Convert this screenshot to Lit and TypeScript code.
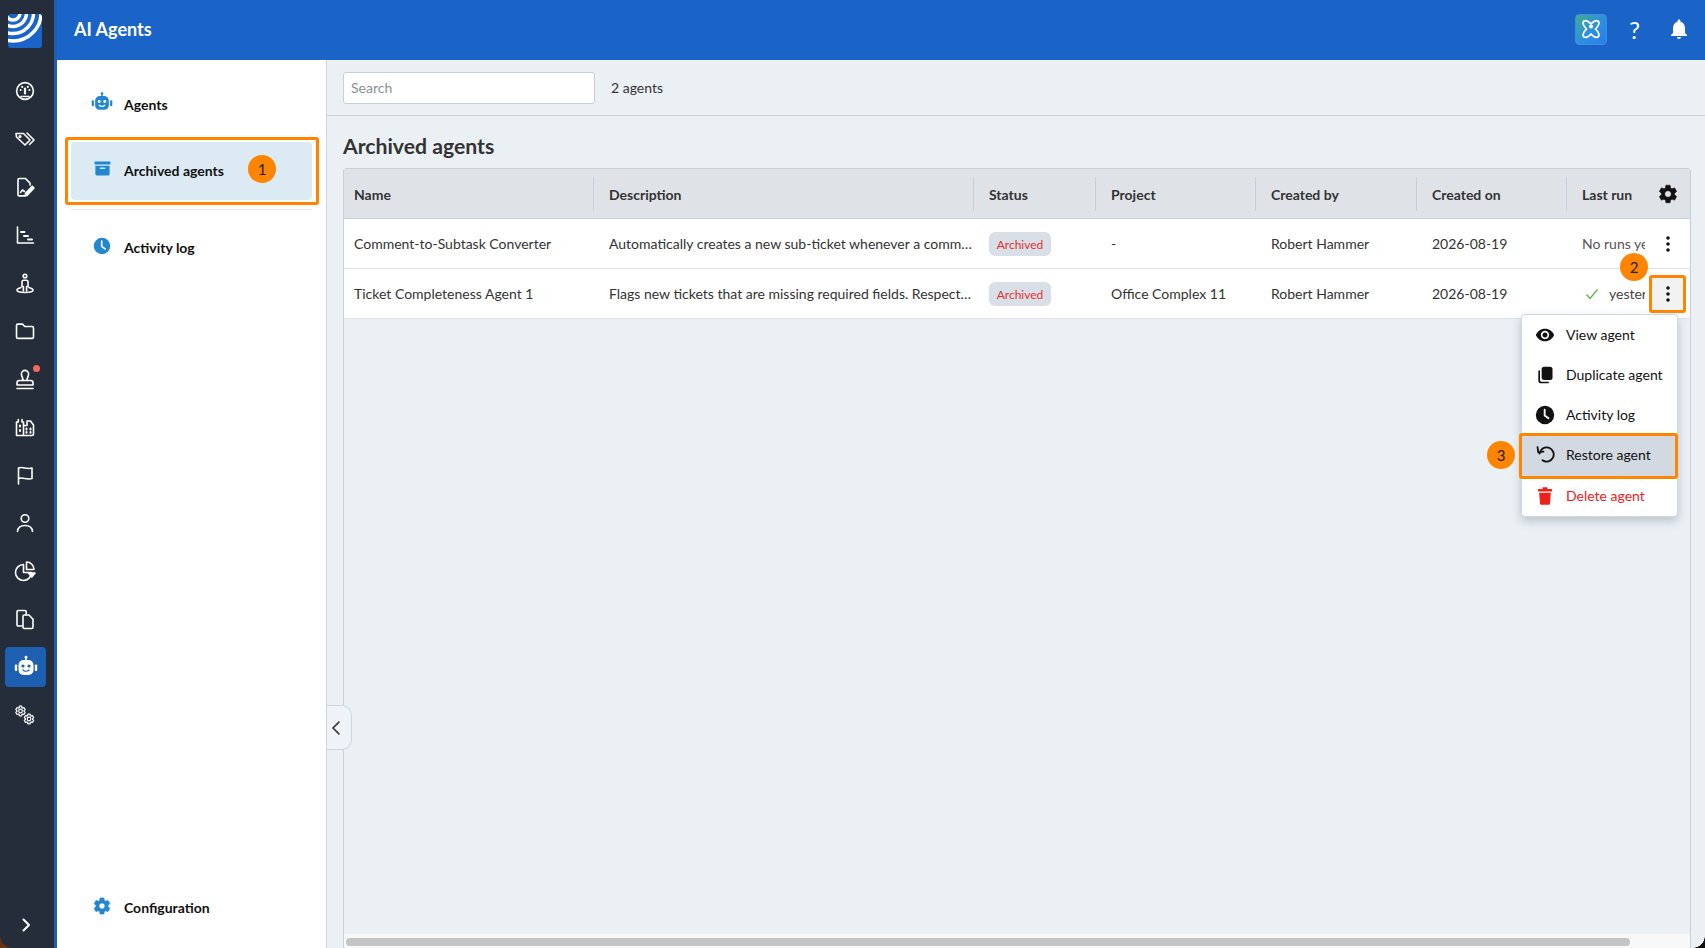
import {LitElement, html, css, svg} from 'lit';
import {customElement} from 'lit/decorators.js';

const GEAR = 'M19.14 12.94c.04-.3.06-.61.06-.94 0-.32-.02-.64-.07-.94l2.03-1.58a.49.49 0 0 0 .12-.61l-1.92-3.32a.488.488 0 0 0-.59-.22l-2.39.96c-.5-.38-1.03-.7-1.62-.94l-.36-2.54a.484.484 0 0 0-.48-.41h-3.84c-.24 0-.43.17-.47.41l-.36 2.54c-.59.24-1.13.57-1.62.94l-2.39-.96c-.22-.08-.47 0-.59.22L2.74 8.87c-.12.21-.08.47.12.61l2.03 1.58c-.05.3-.09.63-.09.94s.02.64.07.94l-2.03 1.58a.49.49 0 0 0-.12.61l1.92 3.32c.12.22.37.29.59.22l2.39-.96c.5.38 1.03.7 1.62.94l.36 2.54c.05.24.24.41.48.41h3.84c.24 0 .44-.17.47-.41l.36-2.54c.59-.24 1.13-.56 1.62-.94l2.39.96c.22.08.47 0 .59-.22l1.92-3.32c.12-.22.07-.47-.12-.61l-2.01-1.58zM12 15.6c-1.98 0-3.6-1.62-3.6-3.6s1.62-3.6 3.6-3.6 3.6 1.62 3.6 3.6-1.62 3.6-3.6 3.6z';

const ic = (size: number, body: unknown, fill = 'currentColor') => html`
  <svg width=${size} height=${size} viewBox="0 0 24 24" fill=${fill}>${body}</svg>
`;

const robot = (size: number, color: string, face: string) => ic(size, svg`
  <rect x="11.2" y="1.5" width="1.6" height="4" fill=${color}/>
  <circle cx="12" cy="2.2" r="1.4" fill=${color}/>
  <rect x="4.5" y="5" width="15" height="15" rx="5" fill=${color}/>
  <rect x="0.8" y="9.5" width="2.4" height="6.5" rx="1" fill=${color}/>
  <rect x="20.8" y="9.5" width="2.4" height="6.5" rx="1" fill=${color}/>
  <circle cx="9" cy="11" r="1.6" fill=${face}/>
  <circle cx="15" cy="11" r="1.6" fill=${face}/>
  <path d="M9 15c1.6 1.5 4.4 1.5 6 0" fill="none" stroke=${face} stroke-width="1.4" stroke-linecap="round"/>
`);

const clock = (size: number, color: string) => ic(size, svg`
  <circle cx="12" cy="12" r="11" fill=${color}/>
  <path d="M11.6 5.5v7l4.6 3.4" fill="none" stroke="#fff" stroke-width="2.2" stroke-linecap="round" stroke-linejoin="round"/>
`);

const line = (body: unknown) => html`
  <svg class="rail-ico" width="24" height="24" viewBox="0 0 24 24" fill="none" stroke="#fff" stroke-width="1.6" stroke-linecap="round" stroke-linejoin="round">${body}</svg>
`;

const RAIL = [
  svg`<circle cx="12" cy="12" r="8.4"/><path d="M12 9.500v5" stroke-width="2.200"/><path d="M7.600 11v.1M9.200 7.800v.1M14.800 7.800v.1M16.400 11v.1" stroke-width="2"/><path d="M8 17.500h8" stroke-width="1.400"/>`,
  svg`<path d="M3 6.500h7.500l6.500 6.500-5 5L3.500 10z"/><circle cx="7" cy="9.500" r=".8"/><path d="M14 6l7 7-4.500 4.500"/>`,
  svg`<path d="M12.500 3.500H6.200c-.7 0-1.200.5-1.200 1.200v15c0 .7.500 1.200 1.200 1.200H12M12.500 3.500l4.500 4.600v2"/><path d="M7.500 17.500l2-2.500 2 1.500"/><path d="M14 20.500l7-7.500-1.800-1.800-6.600 7-.4 2.500z" fill="#fff"/>`,
  svg`<path d="M4.500 4v16h16"/><path d="M8 9h3.500M11 13h4M15 16.500h4" stroke-width="1.900"/>`,
  svg`<circle cx="12" cy="5" r="1.800"/><path d="M9 15.500V10.800c0-1 .8-1.600 1.600-1.600h2.800c.8 0 1.600.6 1.600 1.600v4.700M10.400 15.500V20M13.600 15.500V20"/><path d="M8 16.500c-2.400.6-4 1.600-4 2.600 0 1.400 3.600 2.400 8 2.400s8-1 8-2.400c0-1-1.600-2-4-2.600"/>`,
  svg`<path d="M3.500 18V6.500c0-.8.6-1.400 1.400-1.400h4.600l2.200 2.400h7.400c.8 0 1.400.6 1.400 1.400V18c0 .8-.6 1.400-1.400 1.400H4.900c-.8 0-1.400-.6-1.400-1.400z"/>`,
  svg`<path d="M10 13.500c0-3-1.600-4-1.600-6.500a3.600 3.600 0 0 1 7.200 0c0 2.500-1.600 3.500-1.600 6.500"/><path d="M4 18v-2.200c0-1.300 1-2.300 2.300-2.300h11.400c1.300 0 2.300 1 2.300 2.300V18zM4 21.500h16"/>`,
  svg`<path d="M3.500 20.500V7h1.800V4.500M9 4.500V7h1.500v13.500M10.500 10.500h3.500V6h3.500l3 4v8.800c0 1-.7 1.700-1.700 1.700H3.500"/><path d="M7 10.500v1M7 15v1M13.500 13.500v1M13.500 17v.8M17.500 13.500v1M17.500 17v.8" stroke-width="2"/>`,
  svg`<path d="M5.500 21V5c4.500-1.800 8 1.800 13.500 0v10.500c-5.500 1.800-9-1.800-13.500 0"/>`,
  svg`<circle cx="12" cy="7.500" r="3.800"/><path d="M4.500 20.500c.3-4 3.500-6 7.500-6s7.200 2 7.500 6"/>`,
  svg`<path d="M10.500 5.500a8 8 0 1 0 8 8h-8z"/><path d="M13.500 3v7.500H21A7.500 7.500 0 0 0 13.500 3z"/><path d="M15.500 14h6.500l-3.250 4z" fill="#fff"/>`,
  svg`<path d="M9 19H5.200c-.7 0-1.200-.5-1.200-1.200V4.700c0-.7.500-1.200 1.200-1.200H12c.7 0 1.200.5 1.200 1.200V8"/><path d="M10 9.500c0-.8.6-1.500 1.400-1.500H16l4 4.200v8c0 .8-.6 1.300-1.400 1.300h-7.200c-.8 0-1.400-.5-1.400-1.300z"/>`,
];

const GEARS = html`
  <svg width="24" height="24" viewBox="0 0 24 24">
    <path d=${GEAR} transform="translate(.5 2) scale(.5)" fill="none" stroke="#fff" stroke-width="2.400"/>
    <path d=${GEAR} transform="translate(9 10) scale(.5)" fill="none" stroke="#fff" stroke-width="2.400"/>
  </svg>
`;

const COLS = ['Name', 'Description', 'Status', 'Project', 'Created by', 'Created on', 'Last run'];

const ROWS = [
  {
    name: 'Comment-to-Subtask Converter',
    desc: 'Automatically creates a new sub-ticket whenever a comment is added to a ticket.',
    project: '-',
    run: 'No runs yet',
    ok: false,
  },
  {
    name: 'Ticket Completeness Agent 1',
    desc: 'Flags new tickets that are missing required fields. Respects the project setup.',
    project: 'Office Complex 11',
    run: 'yesterday',
    ok: true,
  },
];

const DOTS = html`
  <svg width="20" height="20" viewBox="0 0 20 20" fill="#111">
    <circle cx="10" cy="4" r="1.800"/><circle cx="10" cy="10" r="1.800"/><circle cx="10" cy="16" r="1.800"/>
  </svg>
`;

@customElement('app-root')
export class AppRoot extends LitElement {
  static override styles = css`
    :host {
      display: block;
      font-family: Lato, 'Liberation Sans', sans-serif;
      font-size: 14px;
      color: #333;
    }

    .app {
      position: relative;
      display: flex;
      width: 1705px;
      height: 948px;
      overflow: hidden;
      background: #ebf0f5;
    }

    /* left icon rail */
    .rail {
      flex: none;
      width: 54px;
      display: flex;
      flex-direction: column;
      align-items: flex-start;
      background: #252d3a;
      border-right: 3px solid #1d5fb0;
    }

    .logo {
      flex: none;
      height: 67px;
      padding: 14px 0 0 8px;
      box-sizing: border-box;
    }

    .logo svg {
      display: block;
      border-radius: 3px;
    }

    .rail-btn {
      position: relative;
      flex: none;
      width: 41px;
      height: 48px;
      margin-left: 5px;
      display: flex;
      align-items: center;
      justify-content: center;
    }

    .rail-btn.active::before {
      content: '';
      position: absolute;
      inset: 4px 0;
      background: #1d5fb0;
      border-radius: 4px;
    }

    .rail-btn svg {
      position: relative;
    }

    .rail-ico {
      margin-right: 2px;
    }

    .dot {
      position: absolute;
      top: 10px;
      right: 6px;
      width: 7px;
      height: 7px;
      border-radius: 50%;
      background: #f4695a;
    }

    .expand {
      margin-top: auto;
      margin-bottom: -1px;
    }

    .right {
      flex: 1;
      min-width: 0;
      display: flex;
      flex-direction: column;
    }

    .topbar {
      flex: none;
      height: 60px;
      display: flex;
      align-items: center;
      padding: 0 14px 0 17px;
      background: #1a64c8;
      color: #fff;
    }

    .topbar h1 {
      margin: 0 0 2px;
      flex: 1;
      font-size: 18px;
      font-weight: 700;
    }

    .ai {
      width: 32px;
      height: 31px;
      margin-bottom: 2px;
      box-sizing: border-box;
      display: flex;
      align-items: center;
      justify-content: center;
      border: 1px solid #3f8ce8;
      border-radius: 4px;
      background: linear-gradient(135deg, #3fae8c 0%, #2c8fe0 55%, #2a7fe8 100%);
    }

    .help {
      width: 55px;
      margin: 0 5px 2px 0;
      text-align: center;
      font-size: 24px;
    }

    .bell {
      width: 24px;
      display: flex;
      margin-bottom: 2px;
    }

    .body {
      flex: 1;
      min-height: 0;
      display: flex;
    }

    /* secondary nav */
    .side {
      flex: none;
      width: 270px;
      box-sizing: border-box;
      display: flex;
      flex-direction: column;
      padding: 0 14px;
      background: #fff;
      border-right: 1px solid #ccd6e3;
      color: #111;
    }

    .nav {
      display: flex;
      align-items: center;
      gap: 11px;
      height: 58px;
      box-sizing: border-box;
      padding: 0 0 2px 20px;
      border-radius: 4px;
      font-weight: 700;
    }

    .nav-ico {
      flex: none;
      width: 22px;
      height: 22px;
      margin-top: -3px;
      display: flex;
      align-items: center;
      justify-content: center;
    }

    .nav.first {
      margin-top: 16px;
      margin-bottom: 8px;
    }

    .nav.selected {
      background: #dcebf3;
    }

    .sep {
      height: 1px;
      margin-top: 9px;
      background: #e8e8e8;
    }

    .nav.log {
      margin-top: 9px;
    }

    .nav.config {
      margin-top: auto;
      margin-bottom: 11px;
    }

    .main {
      position: relative;
      flex: 1;
      min-width: 0;
      display: flex;
      flex-direction: column;
    }

    .toolbar {
      flex: none;
      height: 56px;
      box-sizing: border-box;
      display: flex;
      align-items: center;
      gap: 16px;
      padding: 0 16px;
      border-bottom: 1px solid #c5d0db;
    }

    .search {
      width: 252px;
      height: 32px;
      box-sizing: border-box;
      display: flex;
      align-items: center;
      padding-left: 7px;
      background: #fff;
      border: 1px solid #c5d0db;
      border-radius: 3px;
      color: #8a8f96;
    }

    .heading {
      flex: none;
      margin: 0;
      height: 52px;
      padding-left: 16px;
      line-height: 60px;
      font-size: 21.200px;
      font-weight: 700;
      color: #333;
    }

    /* table */
    .table {
      flex: 1;
      min-height: 0;
      margin: 0 14px 0 16px;
      display: flex;
      flex-direction: column;
      border: 1px solid #c5d0db;
      border-bottom: 0;
      border-radius: 4px 4px 0 0;
    }

    .row {
      flex: none;
      height: 50px;
      box-sizing: border-box;
      display: grid;
      grid-template-columns: 250px 380px 122px 160px 161px 150px 78px 1fr;
      align-items: center;
      background: #fff;
      border-bottom: 1px solid #dfe3e8;
    }

    .row.head {
      background: #dfe3e8;
      border-bottom: 1px solid #c5d0db;
      font-weight: 700;
    }

    .cell {
      padding-left: 15px;
      overflow: hidden;
      white-space: nowrap;
      text-overflow: ellipsis;
    }

    .cell:first-child {
      padding-left: 10px;
    }

    .head .cell {
      height: 34px;
      line-height: 36px;
      box-sizing: border-box;
      border-right: 1px solid #c5d0db;
      overflow: visible;
    }

    .head .cell.plain {
      border-right: 0;
    }

    .cell.run {
      text-overflow: clip;
      color: #555;
    }

    .run-inner {
      display: flex;
      align-items: center;
      gap: 9px;
      padding-left: 2px;
      color: #444;
    }

    .check {
      flex: none;
    }

    .chip {
      display: inline-block;
      width: 62px;
      height: 24px;
      line-height: 25px;
      text-align: center;
      background: #d8dfe6;
      border-radius: 6px;
      color: #e53030;
      font-size: 12px;
    }

    .act {
      display: flex;
      align-items: center;
      justify-content: center;
    }

    .act.on {
      width: 31px;
      height: 32px;
      justify-self: center;
      background: #f2f2f2;
      border-radius: 2px;
    }

    .scroll {
      flex: none;
      height: 14px;
      box-sizing: border-box;
      margin-top: auto;
      padding: 4px 60px 2px 2px;
      background: #f8f8f8;
    }

    .thumb {
      height: 8px;
      border-radius: 4px;
      background: #c4c4c4;
    }

    .collapse {
      position: absolute;
      left: 0;
      top: 645px;
      width: 25px;
      height: 45px;
      padding-left: 2px;
      box-sizing: border-box;
      display: flex;
      align-items: center;
      background: #eff3f7;
      border: 1px solid #ccd6e3;
      border-left: 0;
      border-radius: 0 10px 10px 0;
    }

    /* row actions menu */
    .menu {
      position: absolute;
      left: 1521px;
      top: 314px;
      width: 157px;
      box-sizing: border-box;
      background: #fff;
      border: 1px solid #d0d7df;
      border-radius: 4px;
      box-shadow: 0 4px 10px rgba(40, 60, 80, 0.25);
      color: #111;
    }

    .item {
      height: 40px;
      box-sizing: border-box;
      padding: 0 0 1px 13px;
      display: flex;
      align-items: center;
      gap: 11px;
    }

    .item.hover {
      height: 41px;
      padding-bottom: 3px;
      background: #d2d9e0;
    }

    .item.danger {
      color: #ee2019;
    }

    /* tutorial annotations */
    .mark {
      position: absolute;
      box-sizing: border-box;
      border: 3px solid #ff8400;
      border-radius: 3px;
    }

    .mark-nav {
      left: 65px;
      top: 137px;
      width: 254px;
      height: 68px;
    }

    .mark-dots {
      left: 1649px;
      top: 275px;
      width: 37px;
      height: 38px;
    }

    .mark-item {
      left: 1519px;
      top: 433px;
      width: 159px;
      height: 46px;
    }

    .badge {
      position: absolute;
      width: 28px;
      height: 28px;
      display: flex;
      align-items: center;
      justify-content: center;
      border-radius: 50%;
      background: #ff8400;
      color: #222;
      font-size: 15px;
    }

    .badge-1 {
      left: 248px;
      top: 155px;
    }

    .badge-2 {
      left: 1620px;
      top: 253px;
    }

    .badge-3 {
      left: 1487px;
      top: 441px;
    }

    .corner {
      position: absolute;
      bottom: 0;
      width: 12px;
      height: 12px;
    }

    .corner.l {
      left: 0;
      background: radial-gradient(circle at 100% 0, transparent 11.500px, #6b3410 12px);
    }

    .corner.r {
      right: 0;
      background: radial-gradient(circle at 0 0, transparent 11.500px, #111 12px);
    }
  `;

  override render() {
    return html`
      <div class="app">
        <div class="rail">
          <div class="logo">
            <svg width="34" height="34" viewBox="0 0 34 34" fill="none" stroke="#fff" stroke-width="3.400">
              <rect width="34" height="34" fill="#1a64c8" stroke="none"/>
              <circle cx="5" cy="-1" r="7"/>
              <circle cx="5" cy="-1" r="13.500"/>
              <circle cx="5" cy="-1" r="20.500"/>
              <circle cx="5" cy="-1" r="28"/>
            </svg>
          </div>
          ${RAIL.map(
            (icon, i) => html`
              <div class="rail-btn">
                ${line(icon)}${i === 6 ? html`<span class="dot"></span>` : ''}
              </div>
            `
          )}
          <div class="rail-btn active">${robot(24, '#fff', '#1d5fb0')}</div>
          <div class="rail-btn">${GEARS}</div>
          <div class="rail-btn expand">
            <svg width="22" height="22" viewBox="0 0 22 22" fill="none" stroke="#fff" stroke-width="2" stroke-linecap="round" stroke-linejoin="round">
              <path d="M8.500 5.500L14 11l-5.500 5.500"/>
            </svg>
          </div>
        </div>

        <div class="right">
          <div class="topbar">
            <h1>AI Agents</h1>
            <div class="ai">
              <svg width="24" height="24" viewBox="0 0 24 24" fill="none" stroke="#fff" stroke-width="1.700">
                <path d="M5 4c3-1.500 5 1 7 3 2-2 4-4.500 7-3 2.500 2-.5 6-2.500 8 2 2 5 6 2.500 8-3 1.500-5-1-7-3-2 2-4 4.500-7 3-2.500-2 .5-6 2.500-8C5.500 10 2.500 6 5 4z"/>
                <circle cx="12" cy="9.500" r="1.200" fill="#fff"/>
              </svg>
            </div>
            <div class="help">?</div>
            <div class="bell">
              ${ic(24, svg`<path d="M12 22c1.100 0 2-.9 2-2h-4c0 1.100.9 2 2 2zm6-6v-5c0-3.070-1.640-5.640-4.500-6.320V4c0-.83-.67-1.500-1.500-1.500s-1.500.67-1.500 1.500v.68C7.630 5.360 6 7.920 6 11v5l-2 2v1h16v-1l-2-2z"/>`)}
            </div>
          </div>

          <div class="body">
            <div class="side">
              <div class="nav first">
                <span class="nav-ico">${robot(23, '#2287cf', '#fff')}</span><span>Agents</span>
              </div>
              <div class="nav selected">
                <span class="nav-ico">
                  ${ic(19, svg`
                    <rect x="2" y="3" width="20" height="4" rx=".6" fill="#2287cf"/>
                    <path d="M3 8.500h18V19c0 1-.8 1.800-1.800 1.800H4.800C3.800 20.800 3 20 3 19z" fill="#2287cf"/>
                    <rect x="8.500" y="10.800" width="7" height="1.800" rx=".9" fill="#dcebf3"/>
                  `)}
                </span>
                <span>Archived agents</span>
              </div>
              <div class="sep"></div>
              <div class="nav log">
                <span class="nav-ico">${clock(18, '#2287cf')}</span><span>Activity log</span>
              </div>
              <div class="nav config">
                <span class="nav-ico">
                  ${ic(20, svg`<path d=${GEAR} fill="#2287cf" stroke="#2287cf" stroke-width=".8"/>`)}
                </span>
                <span>Configuration</span>
              </div>
            </div>

            <div class="main">
              <div class="toolbar">
                <div class="search">Search</div>
                <span>2 agents</span>
              </div>
              <h2 class="heading">Archived agents</h2>
              <div class="table">
                <div class="row head">
                  ${COLS.map(
                    (c, i) => html`<div class="cell ${i === 6 ? 'plain' : ''}">${c}</div>`
                  )}
                  <div class="act">${ic(22, svg`<path d=${GEAR} fill="#111" stroke="#111" stroke-width=".6"/>`)}</div>
                </div>
                ${ROWS.map(
                  (r) => html`
                    <div class="row">
                      <div class="cell">${r.name}</div>
                      <div class="cell">${r.desc}</div>
                      <div class="cell"><span class="chip">Archived</span></div>
                      <div class="cell">${r.project}</div>
                      <div class="cell">Robert Hammer</div>
                      <div class="cell">2026-08-19</div>
                      <div class="cell run">
                        ${r.ok
                          ? html`<div class="run-inner">
                              <svg class="check" width="16" height="16" viewBox="0 0 16 16" fill="none" stroke="#5cb346" stroke-width="1.300">
                                <path d="M2.500 8.500l3.500 4 7.500-9"/>
                              </svg>
                              <span>${r.run}</span>
                            </div>`
                          : r.run}
                      </div>
                      <div class="act ${r.ok ? 'on' : ''}">${DOTS}</div>
                    </div>
                  `
                )}
                <div class="scroll"><div class="thumb"></div></div>
              </div>
              <div class="collapse">
                <svg width="14" height="18" viewBox="0 0 14 18" fill="none" stroke="#333" stroke-width="1.700" stroke-linecap="round" stroke-linejoin="round">
                  <path d="M10 3L4 9l6 6"/>
                </svg>
              </div>
            </div>
          </div>
        </div>

        <div class="menu">
          <div class="item">
            ${ic(20, svg`<path d="M12 4.500C7 4.500 2.730 7.610 1 12c1.730 4.390 6 7.500 11 7.500s9.270-3.110 11-7.500c-1.730-4.390-6-7.500-11-7.500zM12 17c-2.760 0-5-2.240-5-5s2.240-5 5-5 5 2.240 5 5-2.240 5-5 5zm0-8c-1.660 0-3 1.340-3 3s1.340 3 3 3 3-1.340 3-3-1.340-3-3-3z"/>`)}
            <span>View agent</span>
          </div>
          <div class="item">
            ${ic(20, svg`
              <rect x="8" y="2" width="13" height="16" rx="3"/>
              <path d="M6 6.500v11.500c0 1.100.9 2 2 2h8.500v2H7.500C5 22 4 20.500 4 18.500V6.500z"/>
            `)}
            <span>Duplicate agent</span>
          </div>
          <div class="item">${clock(20, '#111')}<span>Activity log</span></div>
          <div class="item hover">
            <svg width="20" height="20" viewBox="0 0 24 24" fill="none" stroke="#111" stroke-width="2.200" stroke-linecap="round" stroke-linejoin="round">
              <path d="M5.500 11.500A8.500 8.500 0 1 1 9 19.500"/>
              <path d="M3.500 3.500V9.800h6.300" transform="rotate(-8 6 7)"/>
            </svg>
            <span>Restore agent</span>
          </div>
          <div class="item danger">
            ${ic(20, svg`
              <rect x="9" y="1.500" width="6" height="3" rx="1"/>
              <rect x="3.500" y="3.500" width="17" height="3.200" rx="1"/>
              <path d="M5 8h14l-1 13c-.1.9-.8 1.500-1.700 1.500H7.700c-.9 0-1.600-.6-1.700-1.500z"/>
            `)}
            <span>Delete agent</span>
          </div>
        </div>

        <div class="mark mark-nav"></div>
        <div class="mark mark-dots"></div>
        <div class="mark mark-item"></div>
        <div class="badge badge-1">1</div>
        <div class="badge badge-2">2</div>
        <div class="badge badge-3">3</div>
        <div class="corner l"></div>
        <div class="corner r"></div>
      </div>
    `;
  }
}

declare global {
  interface HTMLElementTagNameMap {
    'app-root': AppRoot;
  }
}
